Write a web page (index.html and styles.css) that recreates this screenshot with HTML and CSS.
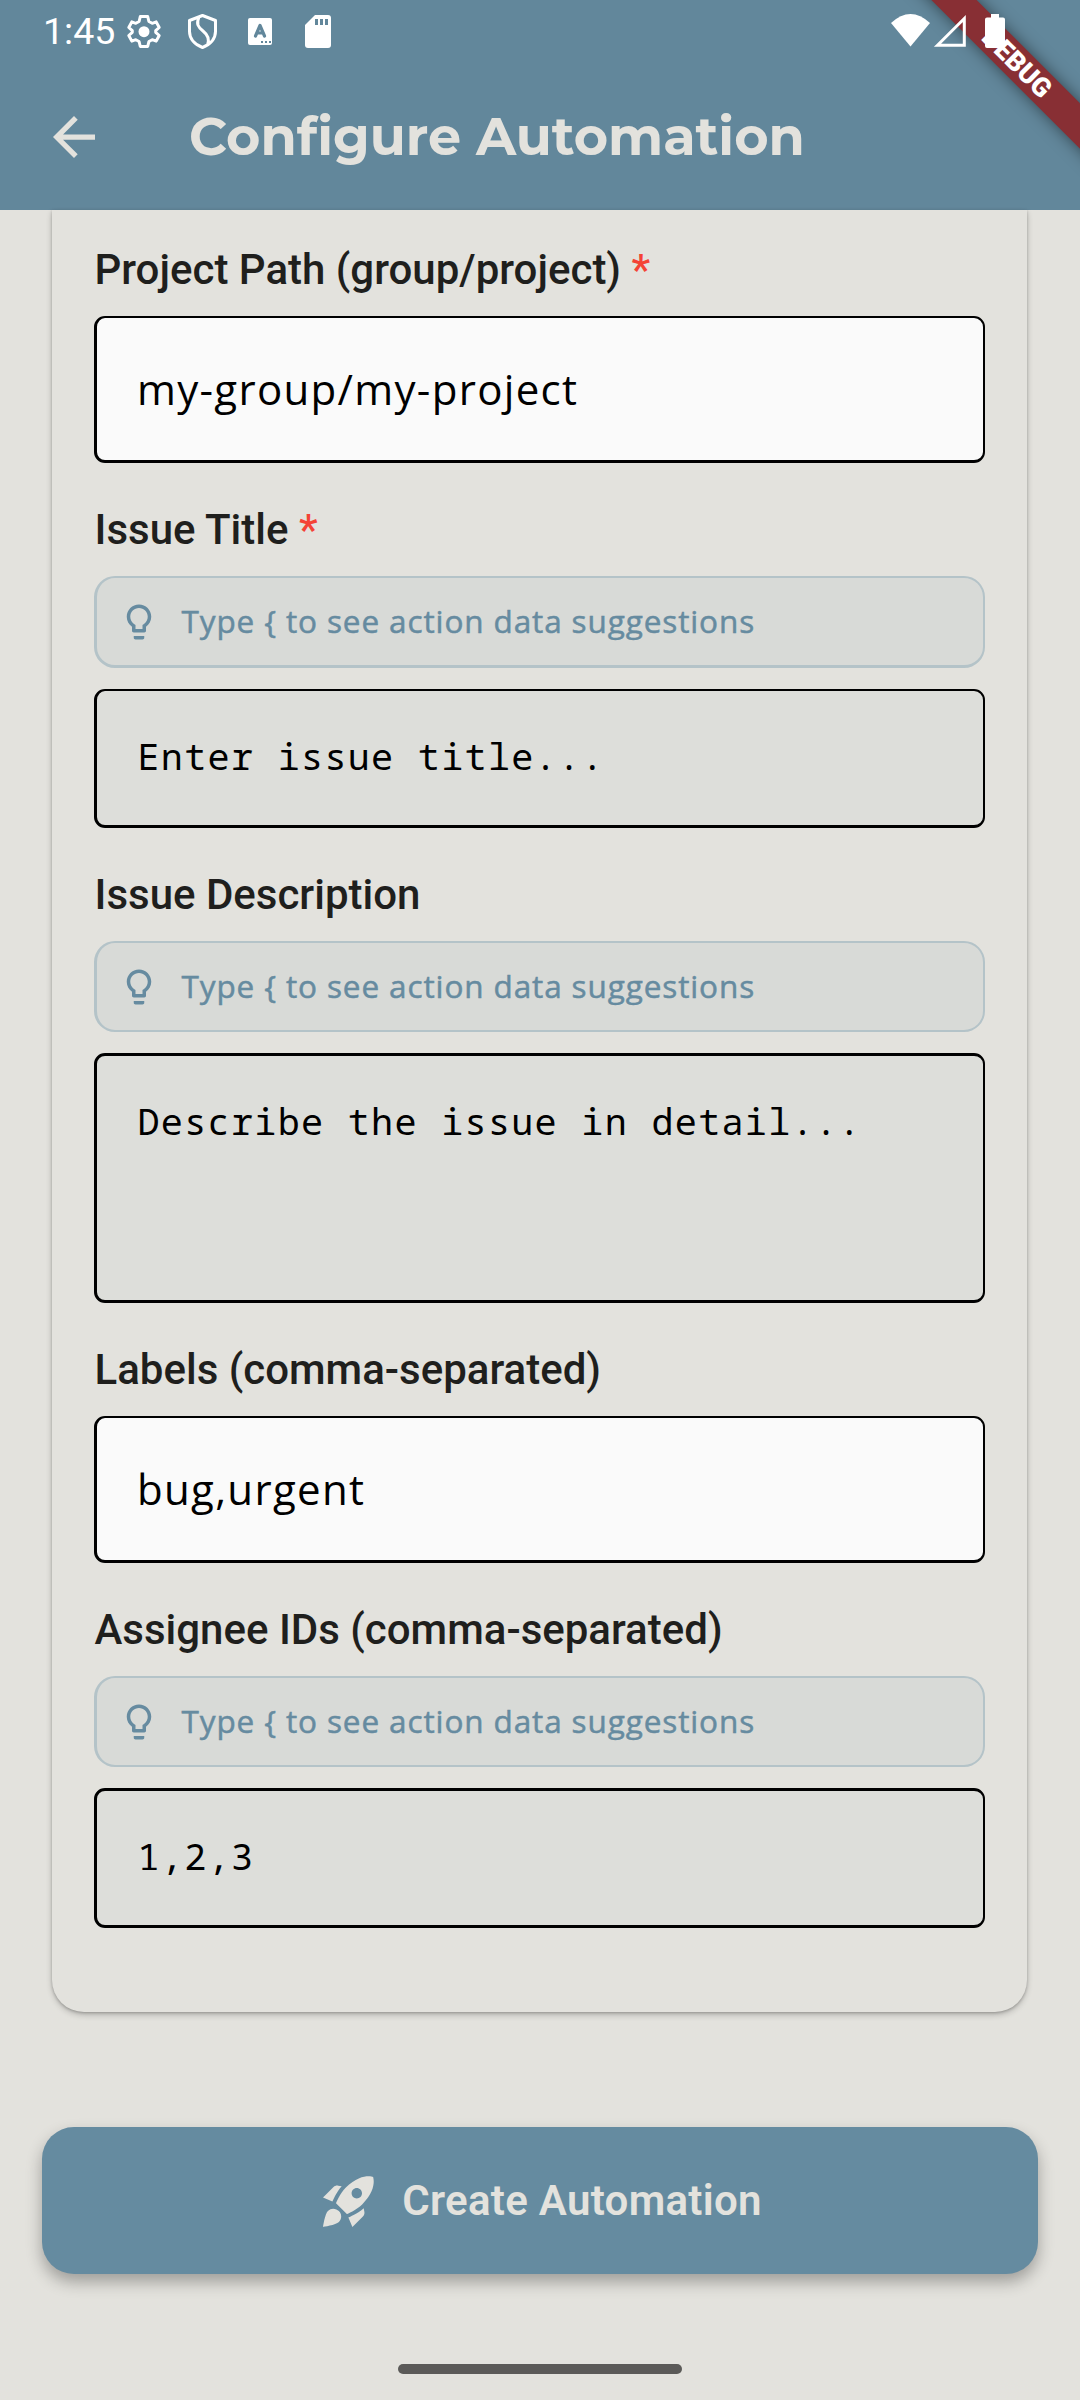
FILE: index.html
```html
<!DOCTYPE html>
<html lang="en">
<head>
<meta charset="utf-8">
<title>Configure Automation</title>
<link rel="stylesheet" href="styles.css">
</head>
<body>
<svg class="defs" aria-hidden="true">
  <symbol id="bulb" viewBox="0 0 24 24"><path d="M9 21c0 .55.45 1 1 1h4c.55 0 1-.45 1-1v-1H9v1zm3-19C8.14 2 5 5.14 5 9c0 2.38 1.19 4.47 3 5.74V17c0 .55.45 1 1 1h6c.55 0 1-.45 1-1v-2.26c1.81-1.27 3-3.36 3-5.74 0-3.86-3.14-7-7-7zm2.850 11.1l-.85.6V16h-4v-2.300l-.85-.6C7.800 12.160 7 10.630 7 9c0-2.760 2.240-5 5-5s5 2.240 5 5c0 1.630-.8 3.160-2.150 4.100z"/></symbol>
</svg>
<div class="screen">
  <header class="appbar">
    <div class="status">
      <span class="clock">1:45</span>
      <svg class="status-left" viewBox="120 0 220 60" width="220" height="60">
        <path fill="none" stroke="#fff" stroke-width="3" stroke-linejoin="round" d="M140.300 16.500h7.400l1.200 5 3.300 1.800 4-1.400 3 5.600-3.500 3.200v1.600l3.500 3.200-3 5.600-4-1.400-3.300 1.800-1.200 5h-7.400l-1.200-5-3.300-1.800-4 1.400-3-5.600 3.500-3.200v-1.600l-3.500-3.200 3-5.600 4 1.400 3.300-1.800z"/>
        <circle cx="144" cy="31.700" r="5.500" fill="#fff"/>
        <path fill="none" stroke="#fff" stroke-width="3" stroke-linejoin="round" d="M202.500 15.500l13 5v11c0 7-5 13-13 16-8-3-13-9-13-16v-11zM199 17c-3 7-1 10 4 14s7 8 4.500 14"/>
        <rect x="248" y="18" width="24" height="27" rx="2" fill="#fff"/>
        <path fill="none" stroke="#62879b" stroke-width="3.200" stroke-linejoin="round" stroke-linecap="round" d="M255.500 36l4.500-10.500 4.500 10.500M257.500 33h5"/>
        <path fill="#62879b" d="M261 41h2v2h-2zM265 41h2v2h-2zM269 41h2v2h-2z"/>
        <path fill="#fff" d="M315 15h13a3 3 0 0 1 3 3v27a3 3 0 0 1-3 3h-20a3 3 0 0 1-3-3V25z"/>
        <path fill="#62879b" d="M315 19h3v6h-3zM320 19h3v6h-3zM325 19h3v6h-3z"/>
      </svg>
    </div>
    <div class="toolbar">
      <svg class="back" viewBox="4 4 16 16" width="42" height="42"><path d="M20 11H7.830l5.590-5.590L12 4l-8 8 8 8 1.410-1.410L7.830 13H20v-2z"/></svg>
      <h1 class="title">Configure Automation</h1>
    </div>
  </header>
  <div class="banner"><span class="banner-text">DEBUG</span></div>
  <svg class="status-right" viewBox="885 0 130 60" width="130" height="60">
    <path fill="#fff" d="M891 23Q910.500 5 930 23L910.500 46.500z"/>
    <path fill="none" stroke="#fff" stroke-width="3" d="M937.500 45.200L964.300 18.500V45.200z"/>
    <path fill="#fff" d="M991 14h8v3.500h4a2 2 0 0 1 2 2V46a2 2 0 0 1-2 2h-16a2 2 0 0 1-2-2V19.500a2 2 0 0 1 2-2h4z"/>
  </svg>
  <main class="content">
    <form class="card">
      <label class="label first">Project Path (group/project)<span class="req"> *</span></label>
      <div class="field plain">my-group/my-project</div>
      <label class="label">Issue Title<span class="req"> *</span></label>
      <div class="hint tall"><svg class="bulb"><use href="#bulb"/></svg><span class="hint-text">Type { to see action data suggestions</span></div>
      <div class="field mono">Enter issue title...</div>
      <label class="label">Issue Description</label>
      <div class="hint"><svg class="bulb"><use href="#bulb"/></svg><span class="hint-text">Type { to see action data suggestions</span></div>
      <div class="field mono area">Describe the issue in detail...</div>
      <label class="label">Labels (comma-separated)</label>
      <div class="field plain">bug,urgent</div>
      <label class="label">Assignee IDs (comma-separated)</label>
      <div class="hint"><svg class="bulb"><use href="#bulb"/></svg><span class="hint-text">Type { to see action data suggestions</span></div>
      <div class="field mono ids">1,2,3</div>
    </form>
    <button class="create" type="button">
      <svg class="rocket" viewBox="2 2 20 20" width="52" height="52"><path d="M9.190 6.350c-2.040 2.290-3.440 5.580-3.570 5.890L2 10.690l4.050-4.050c.47-.47 1.150-.68 1.810-.55l1.330.26zM11.170 17s3.740-1.550 5.890-3.700c5.400-5.400 4.500-9.620 4.210-10.570-.95-.3-5.170-1.190-10.570 4.210C8.550 9.090 7 12.830 7 12.830L11.170 17zm6.480-2.190c-2.290 2.040-5.580 3.440-5.890 3.570L13.310 22l4.050-4.050c.47-.47.68-1.150.55-1.810l-.26-1.330zM9 18c0 .83-.34 1.580-.88 2.120C6.940 21.300 2 22 2 22s.7-4.940 1.880-6.120A2.996 2.996 0 0 1 9 18zm4-9c0-1.100.9-2 2-2s2 .9 2 2-.9 2-2 2-2-.9-2-2z"/></svg>
      <span class="create-text">Create Automation</span>
    </button>
  </main>
  <div class="handle"></div>
</div>
</body>
</html>
```
FILE: styles.css
```css
* { box-sizing: border-box; }
body { margin: 0; background: #e3e2dd; }
.defs { display: none; }
.screen { position: relative; width: 1080px; height: 2400px; overflow: hidden; display: flex; flex-direction: column; background: #e3e2dd; }
.appbar { height: 210px; flex: none; background: #62879b; }
.status { height: 63px; display: flex; }
.clock { width: 120px; padding-left: 43px; font: 400 37.500px/62px Roboto, sans-serif; color: #fff; white-space: nowrap; }
.toolbar { height: 147px; display: flex; align-items: center; padding-left: 53px; }
.back { fill: #e3e2dd; }
.title { margin: 0 0 2px 94px; font: 700 52.500px/64px Montserrat, Inter, sans-serif; color: #e3e2dd; white-space: nowrap; }
.status-right { position: absolute; left: 885px; top: 0; }
.banner { position: absolute; left: 887px; top: 47px; width: 260px; height: 32px; background: #882f34; transform: rotate(45deg); box-shadow: 0 0 16px rgba(0,0,0,.5); display: flex; align-items: center; justify-content: center; }
.banner-text { font: 900 26.800px/32px Roboto, sans-serif; color: #fff; }
.content { flex: none; height: 2100px; display: flex; flex-direction: column; }
.card { flex: none; margin: 0 53px 0 52px; height: 1802px; padding: 0 42px; display: flex; flex-direction: column; border-radius: 0 0 32px 32px; background: #e3e2dd; box-shadow: 0 3px 6px rgba(0,0,0,.2), 0 1px 3px rgba(0,0,0,.22); }
.label { flex: none; height: 113px; padding: 34px 0 0 .5px; font: 500 42px/66px Roboto, sans-serif; color: #1f1f1d; white-space: nowrap; }
.first { height: 106px; padding-top: 27px; }
.req { color: #f44336; }
.field { flex: none; border: solid #000; border-width: 2px 2px 3px 3px; border-radius: 11px; padding-left: 40px; white-space: nowrap; color: #000; }
.plain { background: #fafafa; font: 400 42px/141px "Open Sans", "Noto Sans", sans-serif; letter-spacing: 1.310px; height: 147px; }
.mono { background: #dddeda; font: 400 36.750px/131px "Noto Sans Mono", "Droid Sans Mono", "DejaVu Sans Mono", monospace; letter-spacing: 1.310px; height: 139px; padding-left: 40.500px; }
.hint { flex: none; display: flex; align-items: center; height: 91px; margin-bottom: 21px; border: solid #b4c3c8; border-width: 2px 2px 2px 3px; border-radius: 21px; background: #d8dad7; padding-left: 21px; }
.hint-text { padding-bottom: 2px; font: 500 31.500px/44px "Open Sans", "Noto Sans", sans-serif; letter-spacing: .885px; -webkit-text-stroke: .5px #668ba0; color: #668ba0; white-space: nowrap; }
.tall { height: 92px; border-bottom-width: 3px; }
.bulb { width: 42px; height: 42px; margin-right: 21.500px; fill: #668ba0; }
.area { height: 250px; border-top-width: 3px; }
.ids { height: 140px; border-top-width: 3px; }
.create { flex: none; margin: 115px 42px 0; height: 147px; border: 0; border-radius: 32px; background: #658ba0; display: flex; align-items: center; justify-content: center; gap: 27px; padding-left: 11px; box-shadow: 0 8px 16px rgba(0,0,0,.3); color: #e3e2dd; }
.rocket { fill: #e3e2dd; }
.create-text { font: 600 42px/50px Roboto, sans-serif; letter-spacing: .3px; }
.handle { flex: none; margin: 54px auto 0; width: 284px; height: 10px; border-radius: 5px; background: #5b5a58; }
```
